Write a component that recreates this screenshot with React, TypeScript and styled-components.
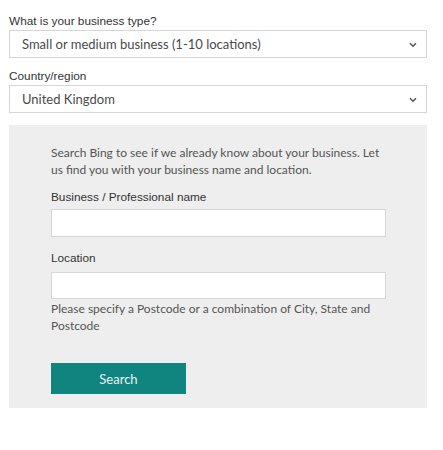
import styled, {createGlobalStyle} from 'styled-components';

const GlobalStyle = createGlobalStyle`
    body {
        margin: 0;
        background: #ffffff;
        font-family: Lato, "Open Sans", sans-serif;
    }
`;

const Page = styled.div`
    width: 418px;
    margin-left: 9px;
    padding-top: 13px;
`;

const FieldLabel = styled.div<{top?: number}>`
    font-family: "Liberation Sans", Arial, sans-serif;
    font-size: 11.8px;
    line-height: 16px;
    color: #333333;
    margin-top: ${p => p.top ?? 0}px;
    margin-bottom: 1px;
`;

const SelectBox = styled.div`
    position: relative;
    height: 28px;
    box-sizing: border-box;
    border: 1px solid #d6d6d6;
    background: #ffffff;
    display: flex;
    align-items: center;
    padding-left: 12px;
    font-size: 13px;
    color: #4a4a4a;
`;

const Chevron = styled.svg`
    position: absolute;
    right: 9px;
    top: 11px;
`;

const Panel = styled.div`
    margin-top: 12px;
    background: #eeeeee;
    padding: 19px 41px 14px 42px;
`;

const Intro = styled.p`
    margin: 0 0 11px;
    font-size: 12px;
    line-height: 17px;
    color: #555555;
`;

const TextInput = styled.input<{h?: number; gap?: number}>`
    display: block;
    width: 100%;
    box-sizing: border-box;
    height: ${p => p.h ?? 28}px;
    border: 1px solid #d6d6d6;
    background: #ffffff;
    margin-top: ${p => p.gap ?? 4}px;
    outline: none;
`;

const Hint = styled.p`
    margin: 1px 0 0;
    font-size: 12px;
    line-height: 17px;
    color: #555555;
`;

const SearchButton = styled.button`
    display: block;
    margin-top: 29px;
    width: 135px;
    height: 31px;
    border: none;
    background: #108580;
    color: #e8f4f3;
    font-family: Lato, "Open Sans", sans-serif;
    font-size: 13px;
`;

const Select = ({value}: {value: string}) => (
    <SelectBox>
        {value}
        <Chevron width="8" height="6" viewBox="0 0 8 6">
            <path d="M1 1.2 L4 4.2 L7 1.2" fill="none" stroke="#555" strokeWidth="1.6"/>
        </Chevron>
    </SelectBox>
);

export default function App() {
    return (
        <Page>
            <GlobalStyle/>
            <FieldLabel>What is your business type?</FieldLabel>
            <Select value="Small or medium business (1-10 locations)"/>
            <FieldLabel top={10}>Country/region</FieldLabel>
            <Select value="United Kingdom"/>
            <Panel>
                <Intro>
                    Search Bing to see if we already know about your business. Let us find you with your business name and location.
                </Intro>
                <FieldLabel>Business / Professional name</FieldLabel>
                <TextInput/>
                <FieldLabel top={13}>Location</FieldLabel>
                <TextInput h={27} gap={6}/>
                <Hint>Please specify a Postcode or a combination of City, State and Postcode</Hint>
                <SearchButton>Search</SearchButton>
            </Panel>
        </Page>
    );
}
